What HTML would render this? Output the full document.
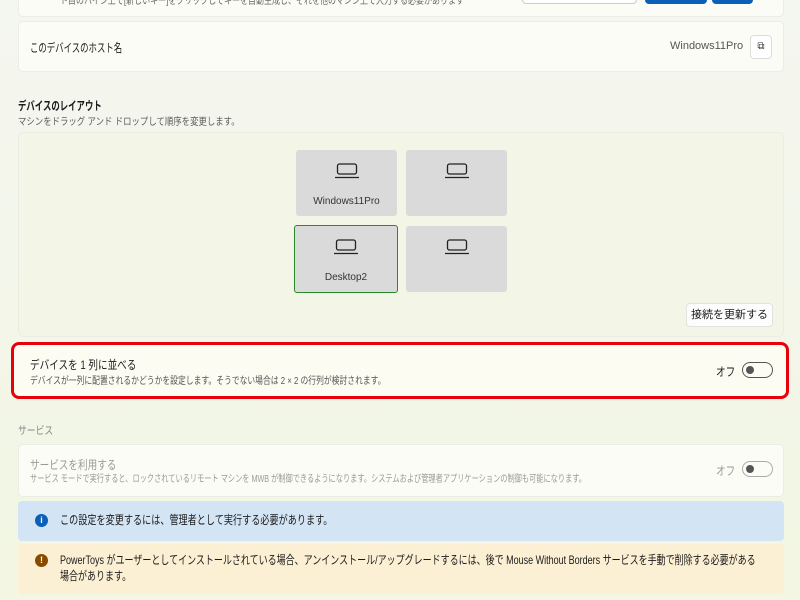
<!DOCTYPE html>
<html><head><meta charset="utf-8"><style>
*{box-sizing:border-box;margin:0;padding:0}
body{width:800px;height:600px;overflow:hidden;background:linear-gradient(180deg,#f4f6f0 0%,#f2f6e2 100%);font-family:"Liberation Sans","Noto Sans CJK JP",sans-serif;color:#1b1b1b;position:relative}
.a{position:absolute;white-space:nowrap}
.c{transform:scaleX(.8);transform-origin:left center}
.card{position:absolute;left:18px;width:766px;background:#fcfcf6;border:1px solid #ebede2;border-radius:5px}
.t{font-size:12px}
.s{font-size:10px;color:#5c5c5c}
.tile{position:absolute;width:101px;height:66px;background:#dadada;border-radius:3px}
.tile svg{position:absolute;left:39px;top:13px}
.tile span{position:absolute;width:100%;text-align:center;top:46px;font-size:10px;color:#333}
.tog{position:absolute;width:31px;height:16px;border:1px solid #555;border-radius:8px}
.tog:after{content:"";position:absolute;left:3px;top:3px;width:8px;height:8px;border-radius:50%;background:#555}
</style></head><body>
<div class="card" style="top:-10px;height:27px"></div>
<div class="a s c" style="left:60px;top:-8px;color:#666">ト目のハイン上で[新しいキー]をクリックしてキーを自動生成し、それを他のマシン上で入力する必要があります</div>
<div class="a" style="left:522px;top:-6px;width:115px;height:10px;background:#fff;border:1px solid #ccc;border-radius:4px"></div>
<div class="a" style="left:645px;top:-6px;width:62px;height:10px;background:#0a5fb8;border-radius:4px"></div>
<div class="a" style="left:712px;top:-6px;width:41px;height:10px;background:#0a5fb8;border-radius:4px"></div>

<div class="card" style="top:21px;height:51px"></div>
<div class="a t c" style="left:30px;top:39px;transform:scaleX(.7)">このデバイスのホスト名</div>
<div class="a" style="left:670px;top:40px;font-size:11px;color:#555">Windows11Pro</div>
<div class="a" style="left:750px;top:35px;width:22px;height:24px;background:#fff;border:1px solid #ddd;border-radius:4px;font-size:10px;text-align:center;line-height:22px;color:#333">⧉</div>

<div class="a t c" style="left:18px;top:97px;font-weight:bold;transform:scaleX(.7)">デバイスのレイアウト</div>
<div class="a s c" style="left:18px;top:113px;transform:scaleX(.84)">マシンをドラッグ アンド ドロップして順序を変更します。</div>

<div class="card" style="top:132px;height:205px;background:#f3f6e6"></div>
<div class="tile" style="left:296px;top:150px"><svg width="24" height="16" viewBox="0 0 24 16" fill="none" stroke="#222" stroke-width="1.3"><rect x="2.5" y="1" width="19" height="10" rx="2"/><line x1="0" y1="14.5" x2="24" y2="14.5"/></svg><span>Windows11Pro</span></div>
<div class="tile" style="left:406px;top:150px"><svg width="24" height="16" viewBox="0 0 24 16" fill="none" stroke="#222" stroke-width="1.3"><rect x="2.5" y="1" width="19" height="10" rx="2"/><line x1="0" y1="14.5" x2="24" y2="14.5"/></svg></div>
<div class="tile" style="left:294px;top:225px;width:104px;height:68px;border:1.5px solid #2a8a2a"><svg width="24" height="16" viewBox="0 0 24 16" fill="none" stroke="#222" stroke-width="1.3"><rect x="2.5" y="1" width="19" height="10" rx="2"/><line x1="0" y1="14.5" x2="24" y2="14.5"/></svg><span>Desktop2</span></div>
<div class="tile" style="left:406px;top:226px"><svg width="24" height="16" viewBox="0 0 24 16" fill="none" stroke="#222" stroke-width="1.3"><rect x="2.5" y="1" width="19" height="10" rx="2"/><line x1="0" y1="14.5" x2="24" y2="14.5"/></svg></div>
<div class="a" style="left:686px;top:303px;width:87px;height:24px;background:#fdfdfd;border:1px solid #e2e2e2;border-radius:4px;font-size:11px;text-align:center;line-height:22px">接続を更新する</div>

<div class="a" style="left:11px;top:342px;width:778px;height:57px;border:3.5px solid #e8000b;border-radius:8px;background:#fcfcf2"></div>
<div class="a t c" style="left:30px;top:356px">デバイスを 1 列に並べる</div>
<div class="a c" style="left:30px;top:372px;font-size:10px;color:#555;transform:scaleX(.78)">デバイスが一列に配置されるかどうかを設定します。そうでない場合は 2 × 2 の行列が検討されます。</div>
<div class="a c" style="left:716px;top:363px;font-size:12px">オフ</div>
<div class="tog" style="left:742px;top:362px"></div>

<div class="a c" style="left:18px;top:422px;font-size:11px;color:#888">サービス</div>
<div class="card" style="top:444px;height:53px"></div>
<div class="a t c" style="left:30px;top:456px;color:#9a9a9a">サービスを利用する</div>
<div class="a c" style="left:30px;top:470px;font-size:10px;color:#9a9a9a;transform:scaleX(.72)">サービス モードで実行すると、ロックされているリモート マシンを MWB が制御できるようになります。システムおよび管理者アプリケーションの制御も可能になります。</div>
<div class="a c" style="left:716px;top:462px;font-size:12px;color:#999">オフ</div>
<div class="tog" style="left:742px;top:461px;border-color:#aaa"></div>

<div class="a" style="left:18px;top:501px;width:766px;height:40px;background:#d3e4f5;border-radius:4px"></div>
<div class="a" style="left:35px;top:514px;width:13px;height:13px;border-radius:50%;background:#0a5fb8;color:#fff;font-size:9px;text-align:center;line-height:13px;font-weight:bold">i</div>
<div class="a c" style="left:60px;top:511px;font-size:12px;transform:scaleX(.76)">この設定を変更するには、管理者として実行する必要があります。</div>

<div class="a" style="left:18px;top:544px;width:766px;height:50px;background:#fcf0d4;border-radius:4px"></div>
<div class="a" style="left:35px;top:554px;width:13px;height:13px;border-radius:50%;background:#8a4b00;color:#fff;font-size:9px;text-align:center;line-height:13px;font-weight:bold">!</div>
<div class="a c" style="left:60px;top:552px;font-size:12px;line-height:16px;transform:scaleX(.75)">PowerToys がユーザーとしてインストールされている場合、アンインストール/アップグレードするには、後で Mouse Without Borders サービスを手動で削除する必要がある<br>場合があります。</div>
</body></html>
